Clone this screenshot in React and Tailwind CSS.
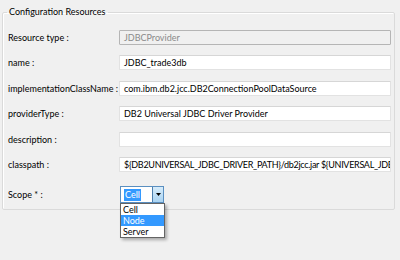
import React from "react";

const font = { fontFamily: 'Lato, "Noto Sans", sans-serif' };

function Row({ label, children, className = "" }) {
  return (
    <div className={"flex items-center h-[15px] " + className}>
      <div className="w-[116px] shrink-0 pl-[5px] text-[9px] leading-[15px] text-[#000] whitespace-nowrap">{label}</div>
      {children}
    </div>
  );
}

function Field({ value = "", disabled = false, tight = false }) {
  return (
    <div
      className={
        "w-[272px] h-[15px] overflow-hidden whitespace-nowrap pl-[4px] text-[9px] leading-[13px] rounded-[1px] border " +
        (tight ? "tracking-[-0.3px] " : "") +
        (disabled
          ? "bg-[#f0f0f0] border-[#b5b5b5] text-[#8a8a8a]"
          : "bg-white border-[#e2e2e2] border-t-[#d6d6d6] text-[#000]")
      }
    >
      {value}
    </div>
  );
}

export default function App() {
  return (
    <div className="w-[400px] h-[260px] bg-[#f0f0f0] overflow-hidden relative" style={font}>
      <fieldset className="ml-[2px] mt-[4px] w-[393px] h-[206px] border border-[#dadada] rounded-[2px] shadow-[inset_1px_1px_0_#ffffff]">
        <legend className="ml-[4px] px-[2px] text-[9px] leading-[16px] text-[#000]">Configuration Resources</legend>
        <div className="flex flex-col pt-[10px]">
          <Row label="Resource type :">
            <Field value="JDBCProvider" disabled />
          </Row>
          <Row label="name :" className="mt-[10px]">
            <Field value="JDBC_trade3db" />
          </Row>
          <Row label="implementationClassName :" className="mt-[11px]">
            <Field value="com.ibm.db2.jcc.DB2ConnectionPoolDataSource" />
          </Row>
          <Row label="providerType :" className="mt-[10px]">
            <Field value="DB2 Universal JDBC Driver Provider" />
          </Row>
          <Row label="description :" className="mt-[11px]">
            <Field value="" />
          </Row>
          <Row label="classpath :" className="mt-[10px]">
            <Field tight value="${DB2UNIVERSAL_JDBC_DRIVER_PATH}/db2jcc.jar ${UNIVERSAL_JDBC_DRIVER_PATH}/db2jcc_license_cu.jar" />
          </Row>
          <Row label="Scope * :" className="mt-[14px] h-[17px]">
            <div className="relative ml-[1px]">
              <div className="flex w-[44px] h-[17px] border border-[#5a8fc0] bg-white">
                <div className="flex-1 flex items-center pl-[3px]">
                  <span className="bg-[#3399ff] text-white text-[9px] leading-[12px] px-[1px]">Cell</span>
                </div>
                <div className="w-[11px] h-full bg-gradient-to-b from-[#d7ecfa] to-[#a9d3f2] border-l border-[#4d7fae] flex items-center justify-center">
                  <svg width="5" height="3" viewBox="0 0 5 3"><path d="M0 0h5L2.5 3z" fill="#000" /></svg>
                </div>
              </div>
              <div className="absolute left-0 top-[17px] w-[45px] bg-white border border-[#646464] shadow-[2px_2px_3px_rgba(0,0,0,0.3)] text-[9px] leading-[11px] text-[#000]">
                <div className="h-[11px] pl-[2px]">Cell</div>
                <div className="h-[11px] pl-[2px] bg-[#3399ff] text-white">Node</div>
                <div className="h-[11px] pl-[2px]">Server</div>
              </div>
            </div>
          </Row>
        </div>
      </fieldset>
    </div>
  );
}
